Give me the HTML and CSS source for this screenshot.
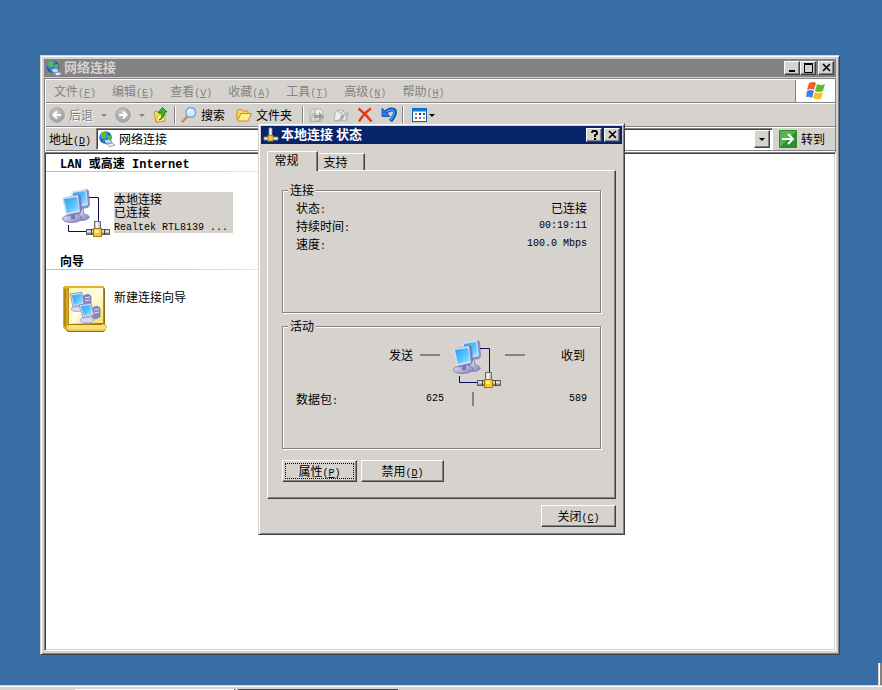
FILE: index.html
```html
<!DOCTYPE html>
<html lang="zh-CN">
<head>
    <meta charset="UTF-8">
    <meta name="viewport" content="width=device-width, initial-scale=1.0">
    <title>网络连接</title>
    <link rel="stylesheet" href="styles.css">
</head>
<body>
    <!-- shared icons -->
    <svg class="sprite" aria-hidden="true">
        <defs>
            <linearGradient id="screen" x1="0" y1="0" x2="1" y2="1">
                <stop offset="0" stop-color="#2a9cf0"/>
                <stop offset="0.6" stop-color="#5cc8ff"/>
                <stop offset="1" stop-color="#a8ecff"/>
            </linearGradient>
            <linearGradient id="pipe" x1="0" y1="0" x2="0" y2="1">
                <stop offset="0" stop-color="#8a8e8a"/>
                <stop offset="0.35" stop-color="#f2f6f2"/>
                <stop offset="1" stop-color="#5a5e5a"/>
            </linearGradient>
            <linearGradient id="stand" x1="0" y1="0" x2="1" y2="1">
                <stop offset="0" stop-color="#f4f4ff"/>
                <stop offset="1" stop-color="#7c7cb8"/>
            </linearGradient>
            <linearGradient id="page" x1="0" y1="0" x2="1" y2="1">
                <stop offset="0" stop-color="#fff6b0"/>
                <stop offset="0.5" stop-color="#fffce0"/>
                <stop offset="1" stop-color="#f6dc68"/>
            </linearGradient>
            <radialGradient id="ocean" cx="0.35" cy="0.3" r="0.8">
                <stop offset="0" stop-color="#7cc4ff"/>
                <stop offset="0.5" stop-color="#1c6cd0"/>
                <stop offset="1" stop-color="#083070"/>
            </radialGradient>
            <radialGradient id="ball" cx="0.4" cy="0.3" r="0.8">
                <stop offset="0" stop-color="#c8c8c8"/>
                <stop offset="1" stop-color="#9c9c9c"/>
            </radialGradient>
        </defs>
        <symbol id="pc" viewBox="0 0 28 35">
            <path d="M17 20 L21 20 L22 26 Q28 27 27 30 Q23 34 17 32 Q13 30 16 27 Z" fill="url(#stand)" stroke="#7878b0" stroke-width="0.8"/>
            <path d="M10 4 L25 1 L27 3 L28 17 L26 20 L12 22 Z" fill="#8c8cc4"/>
            <path d="M9 4 L24 1 L26 17 L12 20 Z" fill="#d4e4f4"/>
            <path d="M11 5 L23 3 L25 16 L13 18 Z" fill="url(#screen)"/>
            <path d="M8 25 L14 24 L16 27 Q21 28 20 31 Q16 35 8 34.500 Q0 34 0.500 30 Q2 27 8 28 Z" fill="url(#stand)" stroke="#7878b0" stroke-width="0.8"/>
            <path d="M9 25 L13 25 L13 31 L9 31 Z" fill="#7474b0"/>
            <path d="M1 10 L17 6 L19 8 L20 22 L18 26 L5 28 Z" fill="#7c7cb8"/>
            <path d="M0 10 L16 7 L18 24 L4 27 Z" fill="#d0e0f0"/>
            <path d="M2 11 L15 9 L17 22 L5 25 Z" fill="url(#screen)"/>
        </symbol>
        <symbol id="plug" viewBox="0 0 24 16">
            <rect x="8.500" y="0.500" width="6" height="8" fill="#c8ccc8" stroke="#6c706c"/>
            <rect x="10" y="1" width="2" height="7" fill="#f4f8f4"/>
            <rect x="0.500" y="8.500" width="23" height="5" fill="url(#pipe)" stroke="#5c605c"/>
            <path d="M5.500 8 V14 M18.500 8 V14" stroke="#3c403c"/>
            <rect x="7.500" y="7.500" width="8" height="8" fill="#f8c830" stroke="#b07800"/>
            <rect x="9" y="9" width="4" height="3" fill="#fff0a0"/>
        </symbol>
        <symbol id="lan" viewBox="0 0 50 50">
            <use href="#pc" x="1" y="1" width="28" height="35"/>
            <path d="M28 10.500 H37.500 V35 M7.500 38 V44.500 H26" fill="none" stroke="#100858"/>
            <use href="#plug" x="25" y="34" width="24" height="16"/>
        </symbol>
        <symbol id="globe" viewBox="0 0 16 16">
            <circle cx="6.500" cy="6.500" r="6.200" fill="url(#ocean)"/>
            <path d="M3 1 Q7 0 8 2 L6 4 L7 6 L4 8 L2 5 Z M8 5 L12 4 L12 8 L9 10 Z M3 9 L5 10 L5 12 Z" fill="#58c030"/>
            <path d="M5 9 L11 8 L13 12 L7 13 Z" fill="#b0dcf8" stroke="#5878b0" stroke-width="0.8"/>
            <path d="M8 13 L13 12 L16 14 L11 16 Z" fill="#e8ecf4" stroke="#7888a8" stroke-width="0.7"/>
        </symbol>
    </svg>

    <main class="window">
        <header class="titlebar inactive">
            <svg class="icon"><use href="#globe"/></svg>
            <h1>网络连接</h1>
            <div class="caption-buttons">
                <button type="button" aria-label="最小化"><svg viewBox="0 0 12 10"><path d="M2 8 H8" stroke="#000" stroke-width="2"/></svg></button>
                <button type="button" aria-label="最大化"><svg viewBox="0 0 12 10"><path d="M1.500 0 V9.500 H9.500 V0 M1 1 H10" fill="none" stroke="#000"/><path d="M1 1 H10" stroke="#000" stroke-width="2"/></svg></button>
                <button type="button" class="close" aria-label="关闭"><svg viewBox="0 0 12 10"><path d="M2 1 L9 8 M9 1 L2 8" stroke="#000" stroke-width="1.600"/></svg></button>
            </div>
        </header>

        <div class="bars">
            <nav class="bar menubar">
                <button type="button">文件<span class="en">(<u>F</u>)</span></button>
                <button type="button">编辑<span class="en">(<u>E</u>)</span></button>
                <button type="button">查看<span class="en">(<u>V</u>)</span></button>
                <button type="button">收藏<span class="en">(<u>A</u>)</span></button>
                <button type="button">工具<span class="en">(<u>T</u>)</span></button>
                <button type="button">高级<span class="en">(<u>N</u>)</span></button>
                <button type="button">帮助<span class="en">(<u>H</u>)</span></button>
                <div class="flag">
                    <svg viewBox="0 0 20 18" width="20" height="18">
                        <path d="M3 1 Q7 -1 10 1 L8 8 Q5 6 1 8 Z" fill="#f06030"/>
                        <path d="M11 2 Q15 4 19 2 L17 9 Q13 11 9 9 Z" fill="#60b830"/>
                        <path d="M1 9 Q5 7 8 9 L6 16 Q3 14 0 15 Z" fill="#4080e0"/>
                        <path d="M9 10 Q13 12 17 10 L15 17 Q11 18 7 16 Z" fill="#f8c020"/>
                    </svg>
                </div>
            </nav>

            <div class="bar toolbar">
                <button type="button" class="disabled" disabled>
                    <svg class="icon" viewBox="0 0 16 16"><circle cx="8" cy="8" r="7.200" fill="url(#ball)" stroke="#949494" stroke-width="0.8"/><path d="M12 8 H5 M8 4.500 L4.500 8 L8 11.500" fill="none" stroke="#fff" stroke-width="2"/></svg>
                    后退
                </button>
                <svg class="caret grey" viewBox="0 0 6 3"><path d="M0 0 H6 L3 3 Z"/></svg>
                <button type="button" class="disabled" aria-label="前进" disabled>
                    <svg class="icon" viewBox="0 0 16 16"><circle cx="8" cy="8" r="7.200" fill="url(#ball)" stroke="#949494" stroke-width="0.8"/><path d="M4 8 H11 M8 4.500 L11.500 8 L8 11.500" fill="none" stroke="#fff" stroke-width="2"/></svg>
                </button>
                <svg class="caret grey" viewBox="0 0 6 3"><path d="M0 0 H6 L3 3 Z"/></svg>
                <button type="button" aria-label="向上">
                    <svg class="icon" viewBox="0 0 16 16"><path d="M1 5 L4 4 L6 5 L11 4 L12 14 L3 15.500 Z" fill="#f8dc60" stroke="#b88c18" stroke-width="0.8"/><path d="M3 15 L5 8 L13 7 L11 14 Z" fill="#fff09c" stroke="#c89c20" stroke-width="0.7"/><path d="M6 13 Q10 11 8.500 6 H5 L9.500 0.500 L14 5 H11.500 Q12 11 6 13 Z" fill="#38b828" stroke="#107010" stroke-width="0.8"/></svg>
                </button>
                <span class="separator"></span>
                <button type="button">
                    <svg class="icon" viewBox="0 0 16 16"><path d="M1 15 L6 9.500" stroke="#c07838" stroke-width="2.400"/><path d="M1 14 L5 9.500" stroke="#f0b878"/><circle cx="9.800" cy="5.500" r="4.800" fill="#d0ecff" stroke="#78a0d8" stroke-width="1.400"/><path d="M7 5 Q7.500 3 10 2.500" fill="none" stroke="#fff" stroke-width="1.400"/></svg>
                    搜索
                </button>
                <button type="button" class="folders">
                    <svg class="icon" viewBox="0 0 16 16"><path d="M1 13 V4 L2 2.500 H6 L7.500 4 H12 V7" fill="#f8d860" stroke="#d09010"/><path d="M1.500 14 L5 6.500 H15.500 L12 14 Z" fill="#fff098" stroke="#d09010"/></svg>
                    文件夹
                </button>
                <span class="separator"></span>
                <button type="button" aria-label="移至" disabled>
                    <svg class="icon" viewBox="0 0 16 16"><path d="M1 14 V3 L2 2 H5 L6 4 H9 V6" fill="#d8d8d8" stroke="#b0b0b0"/><path d="M6 2 H11 L14 5 V13 H6 Z" fill="#ececec" stroke="#b0b0b0"/><path d="M1 14 L4 7 H8 M1 14.500 H12" fill="none" stroke="#acacac"/><path d="M5 8 H10 V5 L15 9.500 L10 14 V11 H5 Z" fill="#9c9c9c"/></svg>
                </button>
                <button type="button" aria-label="复制到" disabled>
                    <svg class="icon" viewBox="0 0 16 16"><path d="M1 13 L2 6 L5 3 H9 L12 6 L14 13 L4 14 Z" fill="#ececec" stroke="#b0b0b0"/><path d="M5 3 L8 7 L11 3 M12 6 L15 6 L13 14" fill="none" stroke="#acacac"/><path d="M2 14 L7 12 L8 8 L12 7 L10 12 L7 14 Z" fill="#a8a8a8"/></svg>
                </button>
                <button type="button" aria-label="删除">
                    <svg class="icon" viewBox="0 0 16 16"><path d="M1.500 1.500 Q9 7 14.500 14.500 M14 1.500 Q7 6 2 14.500" fill="none" stroke="#e83810" stroke-width="2.400"/></svg>
                </button>
                <button type="button" aria-label="撤消">
                    <svg class="icon" viewBox="0 0 16 16"><path d="M4 6 Q9 1 13 3 Q16 6 9.500 14" fill="none" stroke="#1050b0" stroke-width="4"/><path d="M4 6 Q9 1.500 12.500 3.500 Q15 6 9.500 13" fill="none" stroke="#3898f8" stroke-width="1.800"/><path d="M1 1 V9.500 H9 Z" fill="#2878e0" stroke="#1050b0" stroke-width="0.8"/></svg>
                </button>
                <span class="separator"></span>
                <button type="button" class="views" aria-label="查看">
                    <svg class="icon" viewBox="0 0 16 16"><rect x="0.500" y="1.500" width="14" height="13" fill="#fff" stroke="#0860c8"/><path d="M0 3 H15" stroke="#0878e0" stroke-width="3"/><path d="M3 7 H5" stroke="#909090" stroke-width="2"/><path d="M7 7 H9" stroke="#102890" stroke-width="2"/><path d="M11 7 H13" stroke="#208030" stroke-width="2"/><path d="M3 11 H5" stroke="#d84010" stroke-width="2"/><path d="M7 11 H9" stroke="#3080f0" stroke-width="2"/><path d="M11 11 H13" stroke="#e0a000" stroke-width="2"/></svg>
                    <svg class="caret" viewBox="0 0 6 3"><path d="M0 0 H6 L3 3 Z"/></svg>
                </button>
            </div>

            <div class="bar address">
                <label for="address">地址<span class="en">(<u>D</u>)</span></label>
                <div class="combo">
                    <svg class="icon"><use href="#globe"/></svg>
                    <select id="address"><option>网络连接</option></select>
                    <span class="drop"><svg class="caret" viewBox="0 0 6 3"><path d="M0 0 H6 L3 3 Z"/></svg></span>
                </div>
                <button type="button" class="go">
                    <svg viewBox="0 0 18 18" width="18" height="18"><rect width="18" height="18" rx="1" fill="#28902c"/><path d="M1 1 H17 L1 17 Z" fill="#54b450"/><path d="M3 9 H14 M9 4 L14 9 L9 14" fill="none" stroke="#fff" stroke-width="2"/></svg>
                    转到
                </button>
            </div>
        </div>

        <section class="content">
            <h2><span class="en">LAN </span>或高速<span class="en"> Internet</span></h2>
            <a class="item" href="#">
                <svg width="50" height="50"><use href="#lan"/></svg>
                <span class="item-text selected">本地连接<br>已连接<br><span class="en">Realtek RTL8139 ...</span></span>
            </a>
            <h2>向导</h2>
            <a class="item" href="#">
                <svg viewBox="0 0 50 50" width="50" height="50">
                    <path d="M3 3 L5 1 L42 1 L44 4 V39 L46 42 L43 47 H7 L3 43 Z" fill="#8c6c10"/>
                    <path d="M2 2 H8 V41 L6 46 L2 42 Z" fill="#d8a820"/>
                    <path d="M4 4 V41" stroke="#8a6408"/>
                    <path d="M7 39 H43 L46 42 L43 46 H8 L5 44 Z" fill="#f0cc48"/>
                    <path d="M8 41 H45 M7 43 H45" stroke="#fff4b0"/>
                    <path d="M8 3 H42 V38 L8 39 Z" fill="url(#page)"/>
                    <path d="M7.500 3 V39 M42.500 2 V38" stroke="#b88a18"/>
                    <path d="M3 2 H42" stroke="#e0b430" stroke-width="2"/>
                    <path d="M7 39.500 H40 L43 38" fill="none" stroke="#a87810"/>
                    <path d="M22 11 L27 9 L30 11 V20 L25 22 L22 20 Z" fill="#8888bc" stroke="#6868a0" stroke-width="0.6"/>
                    <path d="M24 13 L29 12 M24 16 L29 15" stroke="#e0e0f8"/>
                    <ellipse cx="16" cy="24" rx="6" ry="2.500" fill="#d8d8f4" stroke="#8888b8" stroke-width="0.6"/>
                    <path d="M9 9 L21 7 L23 19 L12 22 Z" fill="#c8d8ec" stroke="#7888b8" stroke-width="0.7"/>
                    <path d="M11 10.500 L20 9 L21.500 17.500 L13 20 Z" fill="url(#screen)"/>
                    <path d="M31 23 L36 21 L39 23 V32 L34 34 L31 32 Z" fill="#8888bc" stroke="#6868a0" stroke-width="0.6"/>
                    <path d="M33 25 L38 24 M33 28 L38 27" stroke="#e0e0f8"/>
                    <ellipse cx="26" cy="35" rx="7" ry="3" fill="#d8d8f4" stroke="#8888b8" stroke-width="0.6"/>
                    <path d="M18 20 L30 18 L33 30 L22 33 Z" fill="#c8d8ec" stroke="#7888b8" stroke-width="0.7"/>
                    <path d="M20 21.500 L29 20 L31 28.500 L23 31 Z" fill="url(#screen)"/>
                </svg>
                <span class="item-text">新建连接向导</span>
            </a>
        </section>
    </main>

    <section class="dialog" role="dialog" aria-labelledby="dialog-title">
        <header class="titlebar">
            <svg class="icon" viewBox="0 0 16 16">
                <path d="M6 1 H9 V9 H6 Z" fill="#f0f4f0" stroke="#888c88" stroke-width="0.8"/>
                <path d="M1 10 H15 V13 H1 Z" fill="#e8ece8" stroke="#808480" stroke-width="0.8"/>
                <path d="M5 8.500 H10 V14 H5 Z" fill="#f8c830" stroke="#c08808"/>
            </svg>
            <h1 id="dialog-title">本地连接 状态</h1>
            <div class="caption-buttons">
                <button type="button" aria-label="帮助"><svg viewBox="0 0 12 10"><path d="M3 3 V2 L4 1 H7 L8 2 V4 L6 5 V7 M5 9 H7" fill="none" stroke="#000" stroke-width="1.800"/></svg></button>
                <button type="button" class="close" aria-label="关闭"><svg viewBox="0 0 12 10"><path d="M2 1 L9 8 M9 1 L2 8" stroke="#000" stroke-width="1.600"/></svg></button>
            </div>
        </header>

        <div class="dialog-body">
            <div class="tabs" role="tablist">
                <button type="button" class="tab active" role="tab" aria-selected="true">常规</button>
                <button type="button" class="tab" role="tab" aria-selected="false">支持</button>
            </div>
            <div class="panel" role="tabpanel">
                <fieldset>
                    <legend>连接</legend>
                    <dl>
                        <div><dt>状态<span class="en">:</span></dt><dd>已连接</dd></div>
                        <div><dt>持续时间<span class="en">:</span></dt><dd class="en">00:19:11</dd></div>
                        <div><dt>速度<span class="en">:</span></dt><dd class="en">100.0 Mbps</dd></div>
                    </dl>
                </fieldset>
                <fieldset>
                    <legend>活动</legend>
                    <div class="activity">
                        <div class="sent">发送<span class="dash"></span></div>
                        <svg class="lan" width="50" height="50"><use href="#lan"/></svg>
                        <div class="received"><span class="dash"></span>收到</div>
                        <div class="packets"><span>数据包<span class="en">:</span></span><span class="en">625</span></div>
                        <span class="divider"></span>
                        <div class="packets-in en">589</div>
                    </div>
                </fieldset>
                <div class="actions">
                    <button type="button" class="btn focused">属性<span class="en">(<u>P</u>)</span></button>
                    <button type="button" class="btn wide">禁用<span class="en">(<u>D</u>)</span></button>
                </div>
            </div>
            <div class="footer">
                <button type="button" class="btn">关闭<span class="en">(<u>C</u>)</span></button>
            </div>
        </div>
    </section>

    <div class="tray-edge"></div>
    <footer class="taskbar">
        <span class="task light"></span>
        <span class="task dark"></span>
    </footer>
</body>
</html>
```
FILE: styles.css
```css
* {
    box-sizing: border-box;
}
body {
    margin: 0;
    height: 100vh;
    position: relative;
    overflow: hidden;
    background-color: #396da5;
    font-family: "Noto Sans CJK SC", sans-serif;
    font-size: 12px;
    line-height: 18px;
    color: #000;
}
button, select {
    font: inherit;
    color: inherit;
    margin: 0;
    padding: 0;
    border: none;
    border-radius: 0;
    background: none;
}
h1, h2, dl, dd {
    margin: 0;
}
a {
    color: inherit;
    text-decoration: none;
}
svg {
    display: block;
    flex: none;
}
.sprite {
    position: absolute;
    width: 0;
    height: 0;
}
.en {
    font-family: "Liberation Mono", monospace;
    font-size: 10px;
    white-space: pre;
}
span.en {
    line-height: 10px;
}
.icon {
    width: 16px;
    height: 16px;
}
.caret {
    width: 6px;
    height: 3px;
}
.caret.grey {
    fill: #848284;
}

/* windows */
.window, .dialog {
    position: absolute;
    background-color: #d6d3ce;
    border: 1px solid;
    border-color: #d6d3ce #424142 #424142 #d6d3ce;
    box-shadow: inset 1px 1px #fff, inset -1px -1px #848284;
}
.window {
    inset: 55px 42px 35px 40px;
    padding: 3px;
    display: flex;
    flex-direction: column;
}
.titlebar {
    display: flex;
    align-items: center;
    gap: 2px;
    height: 18px;
    padding: 0 2px;
    background-color: #08246b;
    color: #fff;
}
.titlebar.inactive {
    background-color: #848284;
    color: #d6d3ce;
}
.titlebar h1 {
    flex: 1;
    font-size: 13px;
    line-height: 16px;
    padding-bottom: 2px;
    font-weight: bold;
}
.caption-buttons {
    display: flex;
}
.caption-buttons button {
    width: 16px;
    height: 14px;
    padding: 1px 2px;
    background-color: #d6d3ce;
    border: 1px solid;
    border-color: #fff #424142 #424142 #fff;
    box-shadow: inset -1px -1px #848284;
}
.caption-buttons svg {
    width: 12px;
    height: 10px;
}
.caption-buttons .close {
    margin-left: 2px;
}

/* menu, toolbar and address rows */
.bars {
    margin-top: 1px;
    border: 1px solid #848284;
    border-bottom: none;
    box-shadow: inset 1px 1px #fff;
    padding: 1px 0 0 1px;
}
.bar {
    display: flex;
    align-items: center;
    height: 24px;
    border-bottom: 1px solid #fff;
    box-shadow: inset 0 -1px #848284;
    padding-bottom: 1px;
}
.menubar {
    color: #848284;
}
.menubar button {
    padding: 0 8px;
    white-space: nowrap;
}
.flag {
    align-self: stretch;
    display: flex;
    align-items: center;
    justify-content: center;
    width: 40px;
    margin-left: auto;
    background-color: #fff;
    border-left: 1px solid #848284;
}
.toolbar {
    padding-left: 3px;
    gap: 8px;
}
.toolbar button {
    display: flex;
    align-items: center;
    gap: 4px;
    white-space: nowrap;
}
.toolbar .disabled {
    color: #848284;
    text-shadow: 1px 1px #fff;
}
.separator {
    width: 2px;
    height: 18px;
    margin: 0 -3px;
    background-color: #848284;
    border-right: 1px solid #fff;
}
.toolbar .folders {
    margin: 0 5px 0 3px;
}
.toolbar .views {
    gap: 1px;
    margin-left: 3px;
}
.address {
    padding-left: 3px;
    gap: 5px;
}
.combo {
    flex: 1;
    display: flex;
    align-items: center;
    height: 22px;
    padding: 1px 2px;
    background-color: #fff;
    border: 1px solid;
    border-color: #848284 #fff #fff #848284;
    box-shadow: inset 1px 1px #424142;
}
.combo select {
    flex: 1;
    appearance: none;
    padding-left: 4px;
}
.drop {
    display: flex;
    align-items: center;
    justify-content: center;
    width: 16px;
    height: 18px;
    background-color: #d6d3ce;
    border: 1px solid;
    border-color: #fff #424142 #424142 #fff;
    box-shadow: inset -1px -1px #848284;
}
.go {
    display: flex;
    align-items: center;
    gap: 4px;
    padding: 0 10px 0 1px;
}

/* connection list */
.content {
    flex: 1;
    background-color: #fff;
    border: 1px solid;
    border-color: #848284 #fff #fff #848284;
    box-shadow: inset 1px 1px #424142, inset -1px -1px #d6d3ce;
    padding: 1px;
}
.content h2 {
    width: 300px;
    padding: 0 14px;
    font-size: 12px;
    line-height: 17px;
    font-weight: bold;
    border-bottom: 1px solid;
    border-image: linear-gradient(to right, #a4c0f0, #f4f4f8) 1;
}
.content h2 .en {
    font-size: 12px;
}
.item {
    display: flex;
    width: 300px;
    padding: 15px 16px 15px 15px;
    gap: 3px;
}
.item-text {
    align-self: flex-start;
    width: 119px;
    margin-top: 5px;
    line-height: 13px;
    white-space: nowrap;
}
.selected {
    background-color: #d6d3ce;
}

/* status dialog */
.dialog {
    left: 258px;
    top: 123px;
    width: 367px;
    padding: 2px;
}
.dialog-body {
    padding: 7px 6px 5px;
}
.tabs {
    display: flex;
    align-items: flex-end;
}
.tab {
    width: 47px;
    height: 17px;
    padding-right: 12px;
    line-height: 16px;
    border: 1px solid;
    border-color: #fff #424142 transparent transparent;
    border-bottom: none;
    box-shadow: inset -1px 0 #848284;
}
.tab.active {
    width: 51px;
    height: 20px;
    margin-bottom: -1px;
    padding-bottom: 3px;
    position: relative;
    background-color: #d6d3ce;
    border-left-color: #fff;
    border-top-left-radius: 2px;
}
.panel {
    padding: 12px 13px 16px 14px;
    border: 1px solid;
    border-color: #fff #424142 #424142 #fff;
    box-shadow: inset -1px -1px #848284;
}
fieldset {
    min-height: 130px;
    margin: 0 1px 6px 0;
    padding: 2px 13px 0;
    border: 1px solid #848284;
    box-shadow: 1px 1px #fff, inset 1px 1px #fff;
}
legend {
    padding: 0 2px;
    margin-left: -8px;
    line-height: 14px;
    background-color: #d6d3ce;
}
dl div {
    display: flex;
    justify-content: space-between;
    height: 18px;
}
.activity {
    display: grid;
    grid-template-columns: 156px 42px 1fr;
    row-gap: 2px;
    padding-top: 3px;
}
.dash {
    width: 20px;
    height: 2px;
    background-color: #848284;
}
.sent, .received {
    display: flex;
    align-items: center;
    height: 34px;
}
.sent {
    justify-content: flex-end;
    gap: 7px;
    padding-right: 12px;
}
.received {
    justify-content: space-between;
    padding: 0 2px 0 11px;
}
.packets {
    display: flex;
    align-items: center;
    justify-content: space-between;
    padding-right: 8px;
}
.divider {
    justify-self: center;
    align-self: center;
    width: 2px;
    height: 14px;
    background-color: #848284;
}
.packets-in {
    text-align: right;
}
.actions {
    display: flex;
    gap: 4px;
    padding-top: 5px;
}
.btn {
    width: 75px;
    height: 22px;
    background-color: #d6d3ce;
    border: 1px solid;
    border-color: #fff #424142 #424142 #fff;
    box-shadow: inset -1px -1px #848284;
}
.btn.wide {
    width: 83px;
}
.btn.focused {
    outline: 1px dotted #000;
    outline-offset: -4px;
}
.footer {
    display: flex;
    justify-content: flex-end;
    padding-top: 6px;
}

/* bottom edge of the desktop */
.tray-edge {
    position: absolute;
    right: 0;
    bottom: 5px;
    width: 4px;
    height: 22px;
    background-color: #fff;
    border-right: 2px solid #848284;
    border-left: 1px solid #d6d3ce;
}
.taskbar {
    position: absolute;
    left: 0;
    right: 0;
    bottom: 0;
    display: flex;
    align-items: flex-end;
    gap: 3px;
    height: 5px;
    padding-left: 75px;
    background-color: #d6d3ce;
    border-top: 1px solid #d6d3ce;
    box-shadow: inset 0 1px #fff;
}
.task {
    width: 160px;
    height: 1px;
}
.task.light {
    background-color: #fff;
    border-right: 1px solid #424142;
}
.task.dark {
    background-color: #424142;
}
```
